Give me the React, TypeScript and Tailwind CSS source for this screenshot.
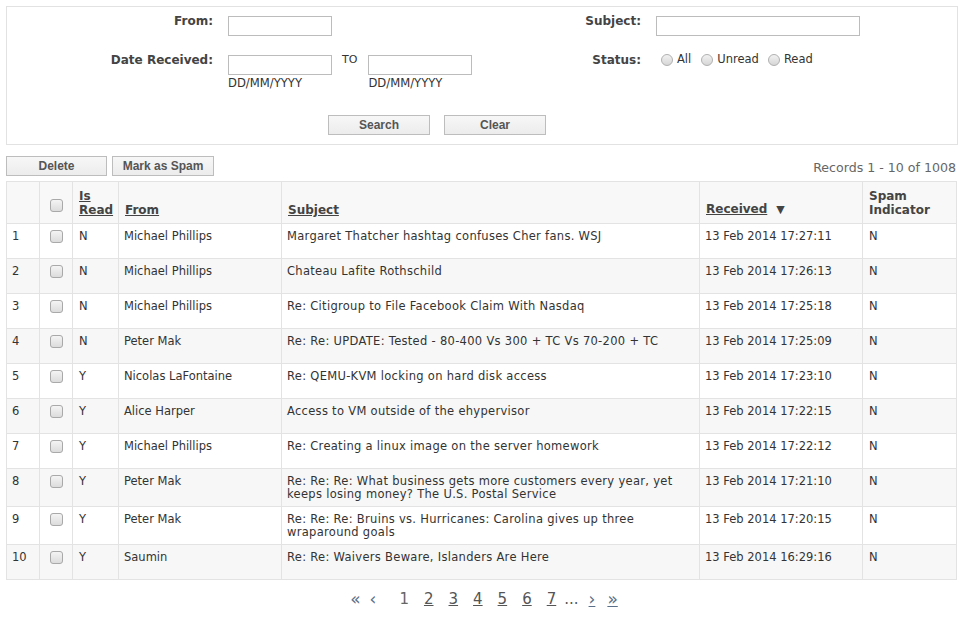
import React from "react";

const rows = [
  { n: 1, read: "N", from: "Michael Phillips", subject: "Margaret Thatcher hashtag confuses Cher fans. WSJ", received: "13 Feb 2014 17:27:11" },
  { n: 2, read: "N", from: "Michael Phillips", subject: "Chateau Lafite Rothschild", received: "13 Feb 2014 17:26:13" },
  { n: 3, read: "N", from: "Michael Phillips", subject: "Re: Citigroup to File Facebook Claim With Nasdaq", received: "13 Feb 2014 17:25:18" },
  { n: 4, read: "N", from: "Peter Mak", subject: "Re: Re: UPDATE: Tested - 80-400 Vs 300 + TC Vs 70-200 + TC", received: "13 Feb 2014 17:25:09" },
  { n: 5, read: "Y", from: "Nicolas LaFontaine", subject: "Re: QEMU-KVM locking on hard disk access", received: "13 Feb 2014 17:23:10" },
  { n: 6, read: "Y", from: "Alice Harper", subject: "Access to VM outside of the ehypervisor", received: "13 Feb 2014 17:22:15" },
  { n: 7, read: "Y", from: "Michael Phillips", subject: "Re: Creating a linux image on the server homework", received: "13 Feb 2014 17:22:12" },
  { n: 8, read: "Y", from: "Peter Mak", subject: "Re: Re: Re: What business gets more customers every year, yet keeps losing money? The U.S. Postal Service", received: "13 Feb 2014 17:21:10" },
  { n: 9, read: "Y", from: "Peter Mak", subject: "Re: Re: Re: Bruins vs. Hurricanes: Carolina gives up three wraparound goals", received: "13 Feb 2014 17:20:15" },
  { n: 10, read: "Y", from: "Saumin", subject: "Re: Re: Waivers Beware, Islanders Are Here", received: "13 Feb 2014 16:29:16" },
];

const Check = () => (
  <span className="inline-block w-[13px] h-[13px] rounded-[3px] border border-[#a9a9a9] bg-gradient-to-b from-[#f4f4f4] to-[#dcdcdc]" />
);

const Radio = () => (
  <span className="inline-block w-[12px] h-[12px] rounded-full border border-[#b0b0b0] bg-gradient-to-b from-[#f2f2f2] to-[#d6d6d6]" />
);

const Btn = ({ children, w }: { children: React.ReactNode; w: string }) => (
  <button
    type="button"
    className={`${w} h-[20px] border border-[#bdbdbd] bg-gradient-to-b from-[#f7f7f7] to-[#ececec] text-[12px] font-bold text-[#555] font-['Liberation_Sans',Arial,sans-serif] leading-[18px]`}
  >
    {children}
  </button>
);

const Field = ({ w }: { w: string }) => (
  <input type="text" className={`${w} h-[20px] border border-[#bcbcbc] bg-white outline-none`} />
);

export default function App() {
  return (
    <div className="p-[6px] font-['DejaVu_Sans',Verdana,sans-serif] text-[11.5px] text-[#333] bg-white min-h-[623px]">
      {/* filter box */}
      <div className="border border-[#e2e2e2] h-[139px] pt-[7px]">
        <div className="grid grid-cols-[206px_288px_110px_1fr] gap-x-[15px] items-start">
          <div className="text-right font-bold text-[12px] leading-[15px] text-[#444]">From:</div>
          <div className="pt-[2px]"><Field w="w-[104px]" /></div>
          <div className="text-right font-bold text-[12px] leading-[15px] text-[#444]">Subject:</div>
          <div className="pt-[2px]"><Field w="w-[204px]" /></div>

          <div className="mt-[17px] text-right font-bold text-[12px] leading-[15px] text-[#444]">Date Received:</div>
          <div className="mt-[19px] flex items-start">
            <div className="flex flex-col">
              <Field w="w-[104px]" />
              <span className="mt-[2px] leading-[13px] text-[11.6px]">DD/MM/YYYY</span>
            </div>
            <span className="ml-[10px] mr-[11px] leading-[13px] mt-[-2px] text-[11px]">TO</span>
            <div className="flex flex-col">
              <Field w="w-[104px]" />
              <span className="mt-[2px] leading-[13px] text-[11.6px]">DD/MM/YYYY</span>
            </div>
          </div>
          <div className="mt-[17px] text-right font-bold text-[12px] leading-[15px] text-[#444]">Status:</div>
          <div className="mt-[16px] flex items-center leading-[15px] pl-[5px]">
            <Radio />
            <span className="ml-[4px] mr-[10px]">All</span>
            <Radio />
            <span className="ml-[4px] mr-[9px]">Unread</span>
            <Radio />
            <span className="ml-[4px]">Read</span>
          </div>
        </div>
        <div className="flex gap-[14px] pl-[321px] mt-[25px]">
          <Btn w="w-[102px]">Search</Btn>
          <Btn w="w-[102px]">Clear</Btn>
        </div>
      </div>

      {/* actions */}
      <div className="flex items-end justify-between mt-[11px]">
        <div className="flex gap-[5px]">
          <Btn w="w-[101px]">Delete</Btn>
          <Btn w="w-[102px]">Mark as Spam</Btn>
        </div>
        <div className="text-[12.6px] text-[#666] leading-[16px] pr-[2px]">Records 1 - 10 of 1008</div>
      </div>

      {/* table */}
      <table className="mt-[5px] w-[951px] table-fixed border-collapse border border-[#e3e3e3]">
        <colgroup>
          <col className="w-[33px]" />
          <col className="w-[33px]" />
          <col className="w-[46px]" />
          <col className="w-[163px]" />
          <col className="w-[418px]" />
          <col className="w-[163px]" />
          <col className="w-[94px]" />
        </colgroup>
        <thead>
          <tr className="h-[42px] bg-[#f8f8f8] text-[12px] font-bold text-[#444] leading-[14px]">
            <th className="border border-[#e3e3e3]"></th>
            <th className="border border-[#e3e3e3] align-bottom pb-[8px] text-center"><span className="inline-block"><Check /></span></th>
            <th className="border border-[#e3e3e3] align-bottom text-left pl-[6px] pb-[6px]"><span className="underline">Is<br />Read</span></th>
            <th className="border border-[#e3e3e3] align-bottom text-left pl-[6px] pb-[6px]"><span className="underline">From</span></th>
            <th className="border border-[#e3e3e3] align-bottom text-left pl-[6px] pb-[6px]"><span className="underline">Subject</span></th>
            <th className="border border-[#e3e3e3] align-bottom text-left pl-[6px] pb-[6px]">
              <span className="underline">Received</span>
              <span className="ml-[9px] text-[11px]">▼</span>
            </th>
            <th className="border border-[#e3e3e3] align-bottom text-left pl-[6px] pb-[6px]">Spam<br />Indicator</th>
          </tr>
        </thead>
        <tbody>
          {rows.map((r, i) => (
            <tr key={r.n} className={`h-[35px] align-top leading-[13px] ${i % 2 === 1 ? "bg-[#f7f7f7]" : "bg-white"}`}>
              <td className="border border-[#e3e3e3] pl-[5px] pt-[6px] pb-[5px]">{r.n}</td>
              <td className="border border-[#e3e3e3] text-center pt-[6px]"><Check /></td>
              <td className="border border-[#e3e3e3] pl-[6px] pt-[6px] pb-[5px]">{r.read}</td>
              <td className="border border-[#e3e3e3] pl-[5px] pt-[6px] pb-[5px]">{r.from}</td>
              <td className="border border-[#e3e3e3] pl-[5px] pt-[6px] pb-[5px] pr-[24px] tracking-[0.3px]">{r.subject}</td>
              <td className="border border-[#e3e3e3] pl-[5px] pt-[6px] pb-[5px]">{r.received}</td>
              <td className="border border-[#e3e3e3] pl-[6px] pt-[6px] pb-[5px]">N</td>
            </tr>
          ))}
        </tbody>
      </table>

      {/* pagination */}
      <div className="flex justify-center items-center mt-[10px] text-[15px] text-[#555] leading-[18px] pl-[4px]">
        <span className="mr-[9px] text-[17px] text-[#5a7088]">«</span>
        <span className="mr-[23px] text-[17px] text-[#5a7088]">‹</span>
        <span className="mr-[15px] text-[#666]">1</span>
        {[2, 3, 4, 5, 6].map((p) => (
          <span key={p} className="underline mr-[15px]">{p}</span>
        ))}
        <span className="underline">7</span>
        <span className="ml-[8px] mr-[10px]">...</span>
        <span className="underline mr-[12px] text-[17px] text-[#5a7088]">›</span>
        <span className="underline text-[17px] text-[#5a7088]">»</span>
      </div>
    </div>
  );
}
